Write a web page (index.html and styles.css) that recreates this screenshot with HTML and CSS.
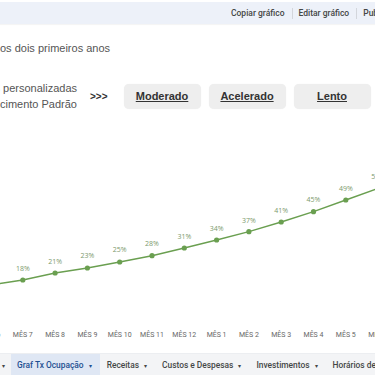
FILE: index.html
```html
<!DOCTYPE html>
<html lang="pt">
<head>
<meta charset="utf-8">
<link rel="stylesheet" href="styles.css">
</head>
<body>
<div class="page">
  <div class="topbar">
    <span class="tb-item">Copiar gráfico</span>
    <span class="tb-sep"></span>
    <span class="tb-item">Editar gráfico</span>
    <span class="tb-sep"></span>
    <span class="tb-item">Publicar gráfico</span>
  </div>

  <div class="title">os dois primeiros anos</div>

  <div class="controls">
    <div class="ctl-label">
      <span>Curvas personalizadas</span>
      <span>Crescimento Padrão</span>
    </div>
    <span class="arrows">&gt;&gt;&gt;</span>
    <div class="buttons">
      <a class="btn">Moderado</a>
      <a class="btn">Acelerado</a>
      <a class="btn">Lento</a>
    </div>
  </div>

  <svg class="chart" viewBox="0 112 375 240" width="375" height="240">
    <polyline class="series" points="-9.5,285 22.8,280 55.1,273 87.4,268 119.7,262 152,255.7 184.3,248 216.6,240 248.9,231.7 281.2,222 313.5,211.7 345.8,200 378.1,188.5"/>
    <g class="dots">
      <circle cx="22.8" cy="280" r="2.6"/>
      <circle cx="55.1" cy="273" r="2.6"/>
      <circle cx="87.4" cy="268" r="2.6"/>
      <circle cx="119.7" cy="262" r="2.6"/>
      <circle cx="152" cy="255.7" r="2.6"/>
      <circle cx="184.3" cy="248" r="2.6"/>
      <circle cx="216.6" cy="240" r="2.6"/>
      <circle cx="248.9" cy="231.7" r="2.6"/>
      <circle cx="281.2" cy="222" r="2.6"/>
      <circle cx="313.5" cy="211.7" r="2.6"/>
      <circle cx="345.8" cy="200" r="2.6"/>
      <circle cx="378.1" cy="188.5" r="2.6"/>
    </g>
    <g class="vals">
      <text x="22.8" y="270.5">18%</text>
      <text x="55.1" y="263.5">21%</text>
      <text x="87.4" y="258">23%</text>
      <text x="119.7" y="252">25%</text>
      <text x="152" y="246">28%</text>
      <text x="184.3" y="239">31%</text>
      <text x="216.6" y="231">34%</text>
      <text x="248.9" y="222.5">37%</text>
      <text x="281.2" y="212.5">41%</text>
      <text x="313.5" y="202">45%</text>
      <text x="345.8" y="190.5">49%</text>
      <text x="378.1" y="178.5">53%</text>
    </g>
    <g class="axis">
      <text x="-9.5" y="336.5">MÊS 6</text>
      <text x="22.8" y="336.5">MÊS 7</text>
      <text x="55.1" y="336.5">MÊS 8</text>
      <text x="87.4" y="336.5">MÊS 9</text>
      <text x="119.7" y="336.5">MÊS 10</text>
      <text x="152" y="336.5">MÊS 11</text>
      <text x="184.3" y="336.5">MÊS 12</text>
      <text x="216.6" y="336.5">MÊS 1</text>
      <text x="248.9" y="336.5">MÊS 2</text>
      <text x="281.2" y="336.5">MÊS 3</text>
      <text x="313.5" y="336.5">MÊS 4</text>
      <text x="345.8" y="336.5">MÊS 5</text>
      <text x="378.1" y="336.5">MÊS 6</text>
    </g>
  </svg>

  <div class="tabs">
    <div class="tab tab-cut"><span>Dashboard</span><span class="caret">▾</span></div>
    <div class="tab active"><span>Graf Tx Ocupação</span><span class="caret">▾</span></div>
    <div class="tab"><span>Receitas</span><span class="caret">▾</span></div>
    <div class="tab"><span>Custos e Despesas</span><span class="caret">▾</span></div>
    <div class="tab"><span>Investimentos</span><span class="caret">▾</span></div>
    <div class="tab"><span>Horários de Funcionamento</span><span class="caret">▾</span></div>
  </div>
</div>
</body>
</html>
```

FILE: styles.css
```css
html, body {
  margin: 0;
  padding: 0;
  background: #ffffff;
}
body {
  width: 375px;
  height: 375px;
  overflow: hidden;
  font-family: Arial, "Liberation Sans", sans-serif;
}
.page {
  width: 375px;
  display: flex;
  flex-direction: column;
}

/* top bar */
.topbar {
  height: 22px;
  margin-top: 2px;
  background: #edf1f9;
  display: flex;
  align-items: center;
  justify-content: flex-start;
  padding-left: 231px;
  white-space: nowrap;
  overflow: hidden;
  box-shadow: 0 1px 1px rgba(0,0,0,0.04);
}
.tb-item {
  font-family: Roboto, "Liberation Sans", sans-serif;
  font-weight: 500;
  font-size: 8.5px;
  color: #444746;
  flex: none;
}
.tb-sep {
  flex: none;
  width: 1px;
  height: 11px;
  background: #d3d6dc;
  margin: 0 6px 0 7px;
}

/* title */
.title {
  margin-top: 17px;
  font-size: 11px;
  line-height: 14px;
  color: #555555;
  white-space: nowrap;
}

/* controls */
.controls {
  margin-top: 25px;
  height: 32px;
  display: flex;
  align-items: center;
}
.ctl-label {
  width: 77px;
  flex: none;
  display: flex;
  flex-direction: column;
  align-items: flex-end;
  font-size: 11px;
  line-height: 16px;
  color: #555555;
  white-space: nowrap;
}
.ctl-label span { flex: none; }
.arrows {
  margin-left: 13px;
  font-size: 10px;
  font-weight: bold;
  color: #333333;
  flex: none;
}
.buttons {
  margin-left: 16px;
  display: flex;
  gap: 8px;
}
.btn {
  width: 77px;
  height: 25px;
  box-sizing: border-box;
  background: #eeeeee;
  border-radius: 5px;
  display: flex;
  align-items: center;
  justify-content: center;
  font-size: 11px;
  font-weight: bold;
  color: #333333;
  text-decoration: underline;
  box-shadow: 0 0 1px rgba(0,0,0,0.08);
}

/* chart */
.chart {
  display: block;
  flex: none;
  overflow: hidden;
}
.series {
  fill: none;
  stroke: #6a9f50;
  stroke-width: 1.4;
}
.dots circle {
  fill: #6a9f50;
}
.vals text {
  font-family: "Open Sans", "Liberation Sans", sans-serif;
  font-size: 7px;
  fill: #7c9a6c;
  text-anchor: middle;
}
.axis text {
  font-family: Roboto, "Liberation Sans", sans-serif;
  font-size: 7px;
  fill: #666666;
  text-anchor: middle;
}

/* bottom tabs */
.tabs {
  height: 22px;
  margin-top: 1px;
  background: #f3f4f6;
  display: flex;
  align-items: stretch;
  white-space: nowrap;
  border-top: 1px solid #eceef1;
}
.tab {
  flex: none;
  display: flex;
  align-items: center;
  padding: 0 8px 0 7px;
  font-family: Roboto, "Liberation Sans", sans-serif;
  font-weight: 500;
  font-size: 8.4px;
  color: #444746;
}
.tab span { flex: none; }
.tab-cut {
  width: 11px;
  box-sizing: border-box;
  padding: 0 6px 0 0;
  justify-content: flex-end;
}
.tab.active {
  background: #dfe7f4;
  color: #1d4f91;
  padding-left: 6px;
}
.caret {
  font-size: 6px;
  margin-left: 5px;
}
```
